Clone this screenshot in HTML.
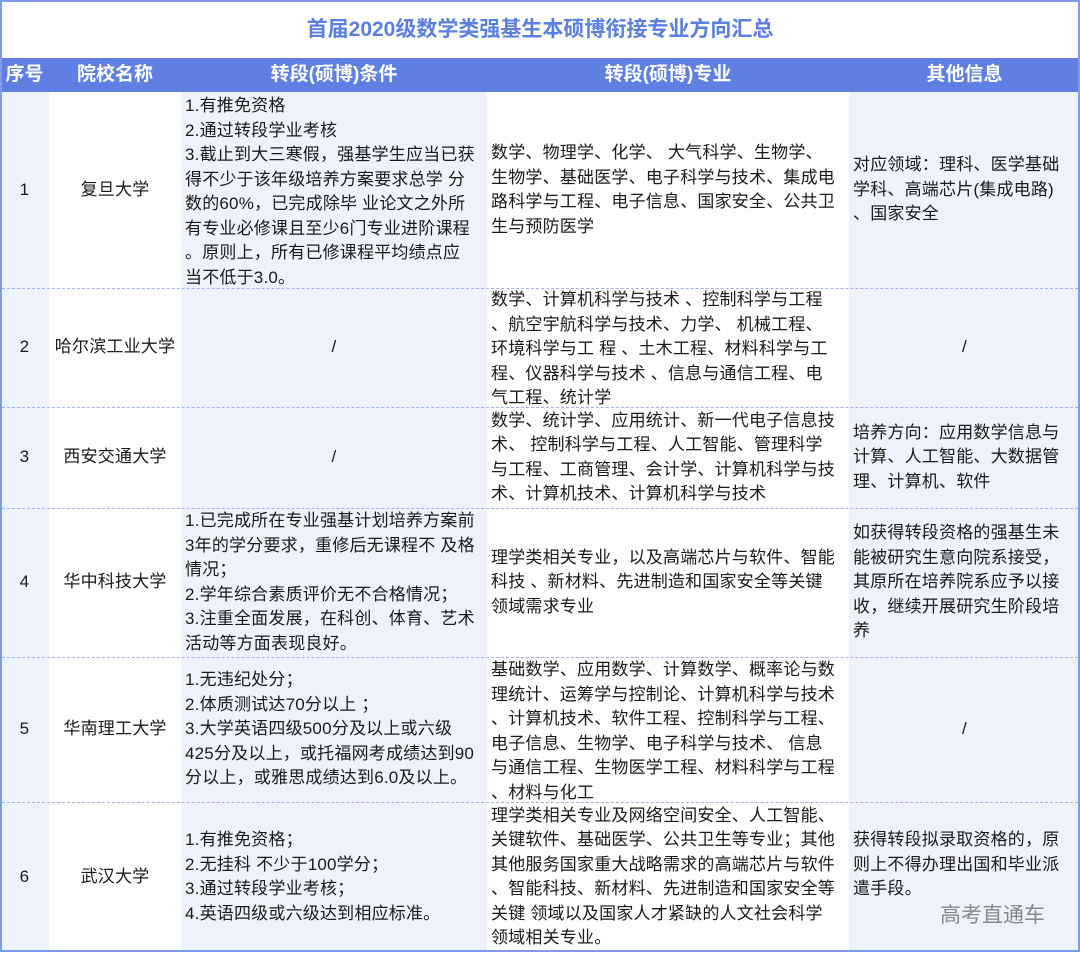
<!DOCTYPE html>
<html><head><meta charset="utf-8"><style>
*{margin:0;padding:0;box-sizing:border-box}
body{width:1080px;height:954px;background:#fff;font-family:"Liberation Sans","Noto Sans CJK SC",sans-serif;color:#1a1a1a;position:relative;overflow:hidden}
.frame{position:absolute;left:0;top:0;width:1080px;height:952px;border:2px solid #7f9cea}
.title{position:absolute;left:0;top:0;width:1080px;height:58px;text-align:center;line-height:60px;font-size:21px;font-weight:bold;color:#5a7fe0}
.hdr{position:absolute;left:0;top:58px;width:1080px;height:34px;background:#5f80e2}
.h{position:absolute;top:58px;height:34px;line-height:34px;color:#fff;font-weight:bold;font-size:19px;text-align:center}
.col{position:absolute;top:92px;height:858px}
.c{position:absolute;display:flex;align-items:center;font-size:17px;letter-spacing:0.2px;line-height:24.5px;white-space:nowrap}
.ctr{justify-content:center;text-align:center}
.sep{position:absolute;left:2px;width:1076px;border-top:1px dashed #9fb3ee}
.wm{position:absolute;left:940px;top:899px;font-size:21px;color:#888}
</style></head><body>
<div class="col" style="left:0;width:49px;background:#eef2fc"></div>
<div class="col" style="left:181px;width:306px;background:#eef2fc"></div>
<div class="col" style="left:849px;width:231px;background:#eef2fc"></div>
<div class="title">首届2020级数学类强基生本硕博衔接专业方向汇总</div>
<div class="hdr"></div>
<div class="h" style="left:0;width:49px">序号</div>
<div class="h" style="left:49px;width:132px">院校名称</div>
<div class="h" style="left:181px;width:306px">转段(硕博)条件</div>
<div class="h" style="left:487px;width:362px">转段(硕博)专业</div>
<div class="h" style="left:849px;width:231px">其他信息</div>

<div class="sep" style="top:288px"></div>
<div class="sep" style="top:407px"></div>
<div class="sep" style="top:508px"></div>
<div class="sep" style="top:657px"></div>
<div class="sep" style="top:802px"></div>

<div class="c ctr" style="left:0;width:49px;top:92px;height:196px">1</div>
<div class="c ctr" style="left:49px;width:132px;top:92px;height:196px">复旦大学</div>
<div class="c" style="left:185px;top:94px;height:196px">1.有推免资格<br>2.通过转段学业考核<br>3.截止到大三寒假，强基学生应当已获<br>得不少于该年级培养方案要求总学 分<br>数的60%，已完成除毕 业论文之外所<br>有专业必修课且至少6门专业进阶课程<br>。原则上，所有已修课程平均绩点应<br>当不低于3.0。</div>
<div class="c" style="left:491px;top:92px;height:196px">数学、物理学、化学、 大气科学、生物学、<br>生物学、基础医学、电子科学与技术、集成电<br>路科学与工程、电子信息、国家安全、公共卫<br>生与预防医学</div>
<div class="c" style="left:853px;top:92px;height:196px">对应领域：理科、医学基础<br>学科、高端芯片(集成电路)<br>、国家安全</div>

<div class="c ctr" style="left:0;width:49px;top:288px;height:119px">2</div>
<div class="c ctr" style="left:49px;width:132px;top:288px;height:119px">哈尔滨工业大学</div>
<div class="c ctr" style="left:181px;width:306px;top:288px;height:119px">/</div>
<div class="c" style="left:491px;top:290px;height:119px">数学、计算机科学与技术 、控制科学与工程<br>、航空宇航科学与技术、力学、 机械工程、<br>环境科学与工 程 、土木工程、材料科学与工<br>程、仪器科学与技术 、信息与通信工程、电<br>气工程、统计学</div>
<div class="c ctr" style="left:849px;width:231px;top:288px;height:119px">/</div>

<div class="c ctr" style="left:0;width:49px;top:407px;height:101px">3</div>
<div class="c ctr" style="left:49px;width:132px;top:407px;height:101px">西安交通大学</div>
<div class="c ctr" style="left:181px;width:306px;top:407px;height:101px">/</div>
<div class="c" style="left:491px;top:407px;height:101px">数学、统计学、应用统计、新一代电子信息技<br>术、 控制科学与工程、人工智能、管理科学<br>与工程、工商管理、会计学、计算机科学与技<br>术、计算机技术、计算机科学与技术</div>
<div class="c" style="left:853px;top:407px;height:101px">培养方向：应用数学信息与<br>计算、人工智能、大数据管<br>理、计算机、软件</div>

<div class="c ctr" style="left:0;width:49px;top:508px;height:149px">4</div>
<div class="c ctr" style="left:49px;width:132px;top:508px;height:149px">华中科技大学</div>
<div class="c" style="left:185px;top:508px;height:149px">1.已完成所在专业强基计划培养方案前<br>3年的学分要求，重修后无课程不 及格<br>情况；<br>2.学年综合素质评价无不合格情况；<br>3.注重全面发展，在科创、体育、艺术<br>活动等方面表现良好。</div>
<div class="c" style="left:491px;top:508px;height:149px">理学类相关专业，以及高端芯片与软件、智能<br>科技 、新材料、先进制造和国家安全等关键<br>领域需求专业</div>
<div class="c" style="left:853px;top:508px;height:149px">如获得转段资格的强基生未<br>能被研究生意向院系接受，<br>其原所在培养院系应予以接<br>收，继续开展研究生阶段培<br>养</div>

<div class="c ctr" style="left:0;width:49px;top:657px;height:145px">5</div>
<div class="c ctr" style="left:49px;width:132px;top:657px;height:145px">华南理工大学</div>
<div class="c" style="left:185px;top:657px;height:145px">1.无违纪处分；<br>2.体质测试达70分以上 ；<br>3.大学英语四级500分及以上或六级<br>425分及以上，或托福网考成绩达到90<br>分以上，或雅思成绩达到6.0及以上。</div>
<div class="c" style="left:491px;top:659px;height:145px">基础数学、应用数学、计算数学、概率论与数<br>理统计、运筹学与控制论、计算机科学与技术<br>、计算机技术、软件工程、控制科学与工程、<br>电子信息、生物学、电子科学与技术、 信息<br>与通信工程、生物医学工程、材料科学与工程<br>、材料与化工</div>
<div class="c ctr" style="left:849px;width:231px;top:657px;height:145px">/</div>

<div class="c ctr" style="left:0;width:49px;top:802px;height:150px">6</div>
<div class="c ctr" style="left:49px;width:132px;top:802px;height:150px">武汉大学</div>
<div class="c" style="left:185px;top:802px;height:150px">1.有推免资格；<br>2.无挂科 不少于100学分；<br>3.通过转段学业考核；<br>4.英语四级或六级达到相应标准。</div>
<div class="c" style="left:491px;top:802px;height:150px">理学类相关专业及网络空间安全、人工智能、<br>关键软件、基础医学、公共卫生等专业；其他<br>其他服务国家重大战略需求的高端芯片与软件<br>、智能科技、新材料、先进制造和国家安全等<br>关键 领域以及国家人才紧缺的人文社会科学<br>领域相关专业。</div>
<div class="c" style="left:853px;top:802px;height:150px;padding-bottom:24px">获得转段拟录取资格的，原<br>则上不得办理出国和毕业派<br>遣手段。</div>
<div class="wm">高考直通车</div>
<div class="frame"></div>
</body></html>
